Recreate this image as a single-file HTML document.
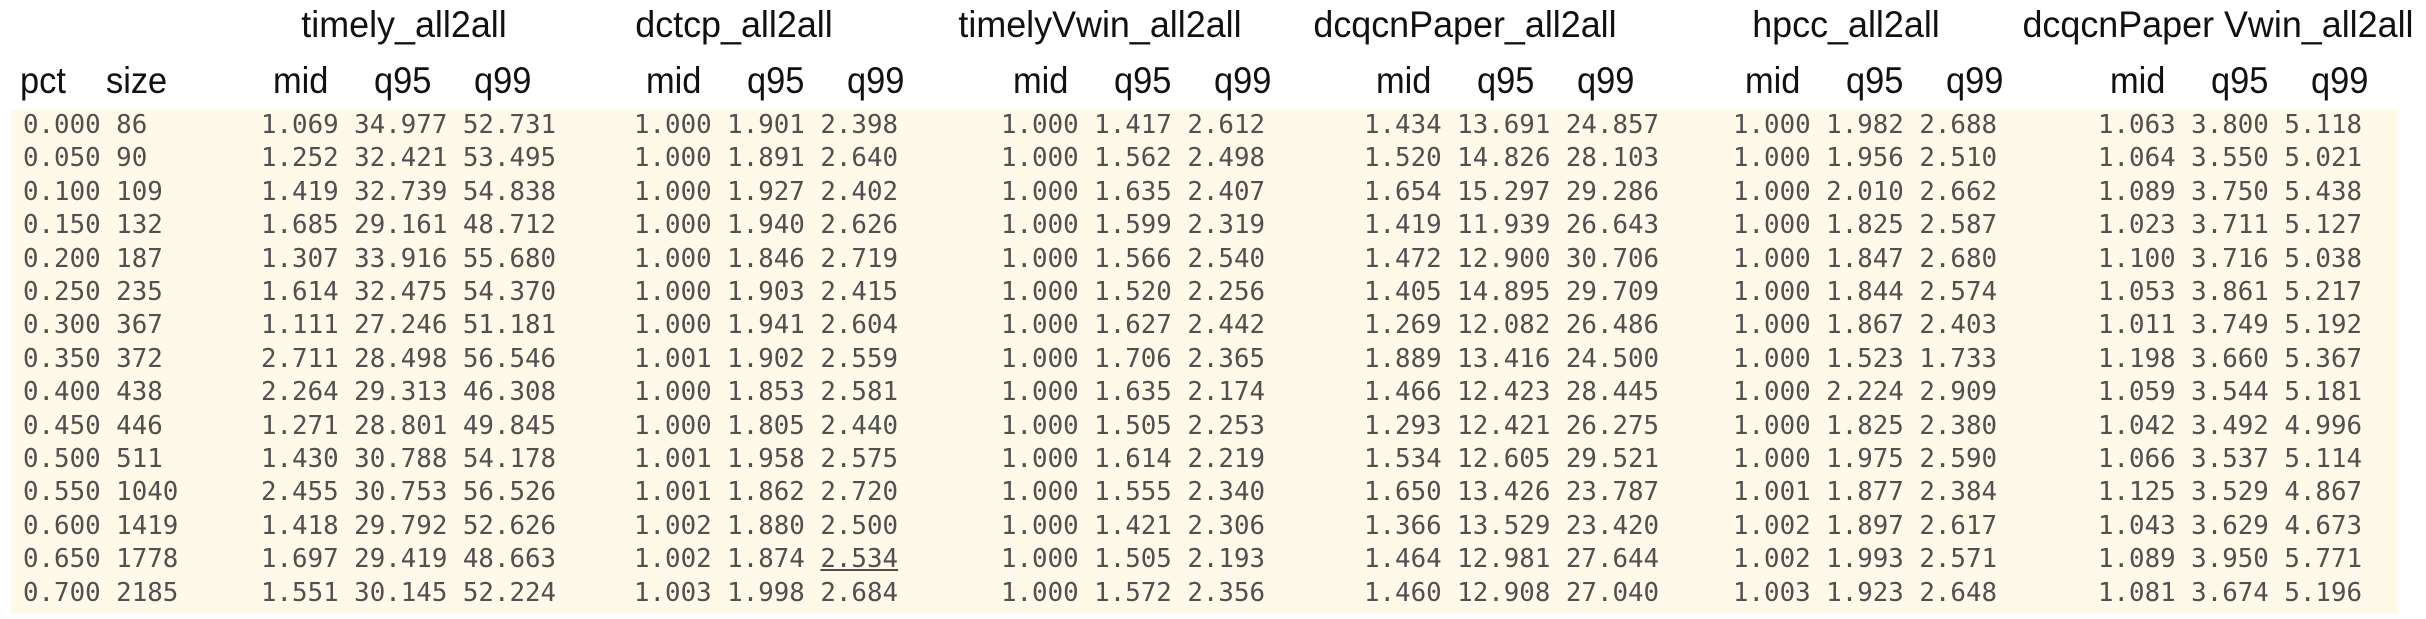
<!DOCTYPE html>
<html><head><meta charset="utf-8"><style>
body{margin:0;width:2426px;height:619px;background:#fff;position:relative;overflow:hidden}
.bg{position:absolute;left:11px;top:110px;width:2387px;height:504px;background:#fef9e8}
.h{position:absolute;font-family:"Liberation Sans",sans-serif;font-size:37px;color:#111;line-height:1;white-space:pre;transform:scaleX(0.93);transform-origin:0 0}
.t{transform:translateX(-50%) scaleX(0.97);transform-origin:50% 0}
.d{position:absolute;font-family:"DejaVu Sans Mono","Liberation Mono",monospace;font-size:25.8px;color:#505050;white-space:pre;line-height:1}
u{text-decoration:underline}
</style></head><body>
<div class="bg"></div>
<div id="c"></div>
<script>
const c=document.getElementById('c');
const titles=[["timely_all2all",404],["dctcp_all2all",734],["timelyVwin_all2all",1100],["dcqcnPaper_all2all",1465],["hpcc_all2all",1846],["dcqcnPaper Vwin_all2all",2218]];
let h='';
titles.forEach(t=>h+=`<div class="h t" style="left:${t[1]}px;top:6px">${t[0]}</div>`);
h+=`<div class="h" style="left:20px;top:62px">pct</div><div class="h" style="left:106px;top:62px">size</div>`;
const cols=[261,634,1001,1364,1733,2098];
cols.forEach(x=>{h+=`<div class="h" style="left:${x+12}px;top:62px">mid</div><div class="h" style="left:${x+113}px;top:62px">q95</div><div class="h" style="left:${x+213}px;top:62px">q99</div>`;});
const rows=`0.000 86|1.069 34.977 52.731|1.000 1.901 2.398|1.000 1.417 2.612|1.434 13.691 24.857|1.000 1.982 2.688|1.063 3.800 5.118
0.050 90|1.252 32.421 53.495|1.000 1.891 2.640|1.000 1.562 2.498|1.520 14.826 28.103|1.000 1.956 2.510|1.064 3.550 5.021
0.100 109|1.419 32.739 54.838|1.000 1.927 2.402|1.000 1.635 2.407|1.654 15.297 29.286|1.000 2.010 2.662|1.089 3.750 5.438
0.150 132|1.685 29.161 48.712|1.000 1.940 2.626|1.000 1.599 2.319|1.419 11.939 26.643|1.000 1.825 2.587|1.023 3.711 5.127
0.200 187|1.307 33.916 55.680|1.000 1.846 2.719|1.000 1.566 2.540|1.472 12.900 30.706|1.000 1.847 2.680|1.100 3.716 5.038
0.250 235|1.614 32.475 54.370|1.000 1.903 2.415|1.000 1.520 2.256|1.405 14.895 29.709|1.000 1.844 2.574|1.053 3.861 5.217
0.300 367|1.111 27.246 51.181|1.000 1.941 2.604|1.000 1.627 2.442|1.269 12.082 26.486|1.000 1.867 2.403|1.011 3.749 5.192
0.350 372|2.711 28.498 56.546|1.001 1.902 2.559|1.000 1.706 2.365|1.889 13.416 24.500|1.000 1.523 1.733|1.198 3.660 5.367
0.400 438|2.264 29.313 46.308|1.000 1.853 2.581|1.000 1.635 2.174|1.466 12.423 28.445|1.000 2.224 2.909|1.059 3.544 5.181
0.450 446|1.271 28.801 49.845|1.000 1.805 2.440|1.000 1.505 2.253|1.293 12.421 26.275|1.000 1.825 2.380|1.042 3.492 4.996
0.500 511|1.430 30.788 54.178|1.001 1.958 2.575|1.000 1.614 2.219|1.534 12.605 29.521|1.000 1.975 2.590|1.066 3.537 5.114
0.550 1040|2.455 30.753 56.526|1.001 1.862 2.720|1.000 1.555 2.340|1.650 13.426 23.787|1.001 1.877 2.384|1.125 3.529 4.867
0.600 1419|1.418 29.792 52.626|1.002 1.880 2.500|1.000 1.421 2.306|1.366 13.529 23.420|1.002 1.897 2.617|1.043 3.629 4.673
0.650 1778|1.697 29.419 48.663|1.002 1.874 <u>2.534</u>|1.000 1.505 2.193|1.464 12.981 27.644|1.002 1.993 2.571|1.089 3.950 5.771
0.700 2185|1.551 30.145 52.224|1.003 1.998 2.684|1.000 1.572 2.356|1.460 12.908 27.040|1.003 1.923 2.648|1.081 3.674 5.196`.split('\n');
rows.forEach((r,i)=>{const p=r.split('|');const y=113+i*33.4;
h+=`<div class="d" style="left:23px;top:${y}px">${p[0]}</div>`;
cols.forEach((x,j)=>h+=`<div class="d" style="left:${x}px;top:${y}px">${p[j+1]}</div>`);});
c.innerHTML=h;
</script>
</body></html>
